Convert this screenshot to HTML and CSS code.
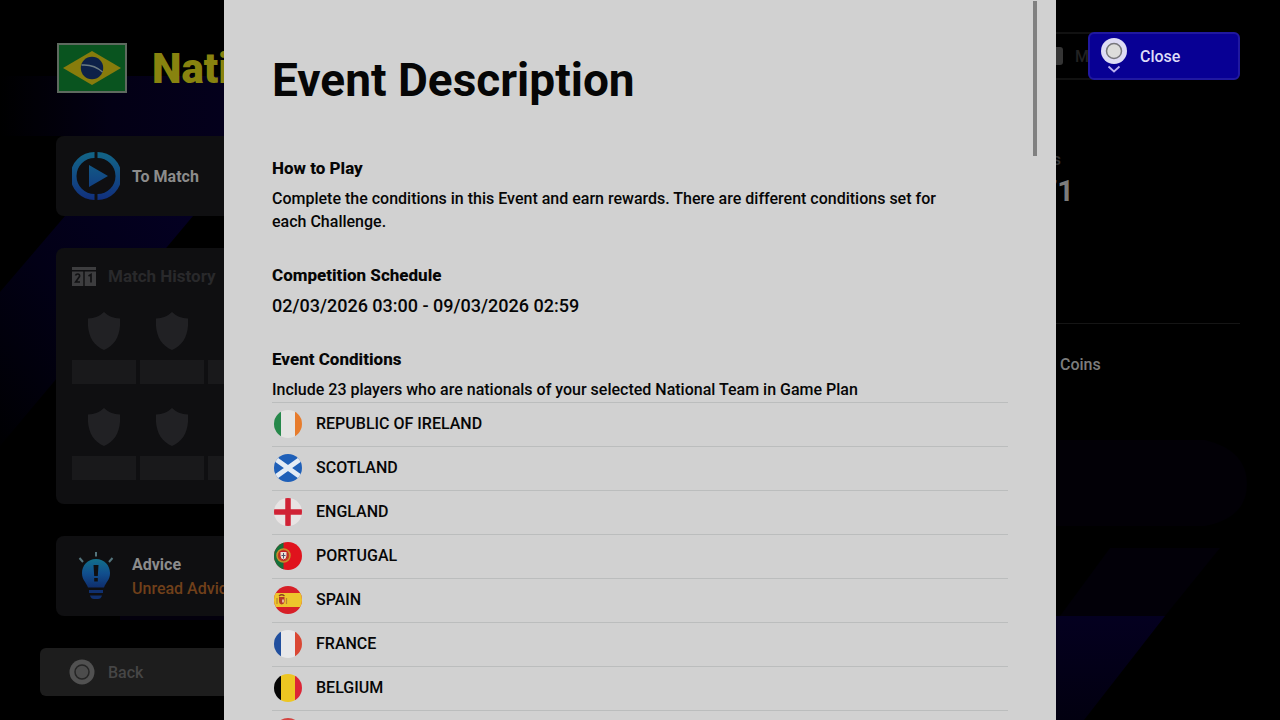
FILE: index.html
```html
<!DOCTYPE html>
<html lang="en">
<head>
<meta charset="utf-8">
<title>Event Description</title>
<link rel="stylesheet" href="styles.css">
</head>
<body>
<div class="screen">
  <svg class="backdrop" viewBox="0 0 1280 720" preserveAspectRatio="none" aria-hidden="true">
    <defs>
      <linearGradient id="band" x1="0" y1="0" x2="1" y2="0"><stop offset="0" stop-color="#000"/><stop offset="0.5" stop-color="#030015"/><stop offset="1" stop-color="#04001c"/></linearGradient>
      <linearGradient id="beam" x1="1" y1="0" x2="0" y2="1"><stop offset="0" stop-color="#040022"/><stop offset="0.5" stop-color="#020016"/><stop offset="1" stop-color="#000002"/></linearGradient>
      <linearGradient id="foot" x1="0" y1="0" x2="0" y2="1"><stop offset="0" stop-color="#040020"/><stop offset="1" stop-color="#020010"/></linearGradient>
    </defs>
    <path d="M0 76H224V136H0z" fill="url(#band)"/>
    <path d="M65 216H193L0 446V292z" fill="url(#beam)"/>
    <path d="M1056 440H1205Q1247 450 1247 484Q1247 518 1205 526H1056z" fill="#020006"/>
    <path d="M1110 548H1220L1165 616H1060z" fill="#020008"/>
    <path d="M1056 616H1165L1084 720H1056z" fill="url(#foot)"/>
    <path d="M120 616H224V620H120z" fill="#03000d"/>
  </svg>

  <header class="top">
    <svg class="flag" viewBox="0 0 70 50" role="img" aria-label="Brazil">
      <rect width="70" height="50" fill="#5e6a5f"/>
      <rect x="2" y="2" width="66" height="46" fill="#09541f"/>
      <path d="M6 25L35 8 64 25 35 42z" fill="#877c0c"/>
      <circle cx="35" cy="25" r="11.200" fill="#0d2148"/>
      <path d="M24.500 22Q37 21 45.500 29" fill="none" stroke="#6c7c83" stroke-width="1.500"/>
    </svg>
    <h2 class="team">Nati</h2>
    <button class="menu" type="button"><span class="menu-icon"></span>Menu</button>
  </header>

  <div class="columns">
    <nav class="side">
      <button class="card action" type="button">
        <svg class="icon" viewBox="0 0 48 48" aria-hidden="true">
          <defs><linearGradient id="ring" x1="0" y1="0" x2="0" y2="1"><stop offset="0" stop-color="#126586"/><stop offset="0.500" stop-color="#124c84"/><stop offset="1" stop-color="#112f7d"/></linearGradient></defs>
          <path d="M22.500 0A24 24 0 0 0 22.500 48V42A18 18 0 0 1 22.500 6zM25.500 0A24 24 0 0 1 25.500 48V42A18 18 0 0 0 25.500 6zM17 13L36 24 17 35z" fill="url(#ring)"/>
        </svg>
        <span class="label">To Match</span>
      </button>

      <section class="card history">
        <h3 class="history-title">
          <svg class="score" viewBox="0 0 24 19" aria-hidden="true"><path d="M0 0H24V3H0zM0 4.500H11.300V19H0zM12.700 4.500H24V19H12.700z" fill="#3d3d3f"/><path d="M3.500 8.500Q4 7 5.700 7Q8 7 7.500 9.500L3.700 15H8M16.500 9L19 7.500V15.500" fill="none" stroke="#111113" stroke-width="1.700"/></svg>
          Match History
        </h3>
        <div class="results">
          <div class="result"><svg class="shield" viewBox="0 0 32 38"><path d="M16 0Q22 6 32 6.500C33 22 28 33 16 38C4 33-1 22 0 6.500Q10 6 16 0z"/></svg><span class="bar"></span></div>
          <div class="result"><svg class="shield" viewBox="0 0 32 38"><path d="M16 0Q22 6 32 6.500C33 22 28 33 16 38C4 33-1 22 0 6.500Q10 6 16 0z"/></svg><span class="bar"></span></div>
          <div class="result"><svg class="shield" viewBox="0 0 32 38"><path d="M16 0Q22 6 32 6.500C33 22 28 33 16 38C4 33-1 22 0 6.500Q10 6 16 0z"/></svg><span class="bar"></span></div>
          <div class="result"><svg class="shield" viewBox="0 0 32 38"><path d="M16 0Q22 6 32 6.500C33 22 28 33 16 38C4 33-1 22 0 6.500Q10 6 16 0z"/></svg><span class="bar"></span></div>
          <div class="result"><svg class="shield" viewBox="0 0 32 38"><path d="M16 0Q22 6 32 6.500C33 22 28 33 16 38C4 33-1 22 0 6.500Q10 6 16 0z"/></svg><span class="bar"></span></div>
          <div class="result"><svg class="shield" viewBox="0 0 32 38"><path d="M16 0Q22 6 32 6.500C33 22 28 33 16 38C4 33-1 22 0 6.500Q10 6 16 0z"/></svg><span class="bar"></span></div>
        </div>
      </section>

      <button class="card action" type="button">
        <svg class="icon" viewBox="0 0 48 48" aria-hidden="true">
          <defs><linearGradient id="bulb" x1="0" y1="0" x2="0" y2="1"><stop offset="0" stop-color="#12708a"/><stop offset="0.500" stop-color="#114f8e"/><stop offset="1" stop-color="#0f2e6d"/></linearGradient></defs>
          <path d="M24 7C15.500 7 10 13.500 10 21C10 28 14 30 16 35.500H32C34 30 38 28 38 21C38 13.500 32.500 7 24 7zM21.500 13H26.500L25.800 24H22.200zM22.200 26H25.800V29.500H22.200z" fill="url(#bulb)" fill-rule="evenodd"/>
          <path d="M17 38H31V41H17zM18 43.500H30Q29 47 26 47H22Q19 47 18 43.500z" fill="#10306e"/>
          <path d="M24 0V4.500M7.500 6L11 10M40.500 6L37 10" stroke="#54747c" stroke-width="2"/>
        </svg>
        <span class="stack"><span class="label">Advice</span><span class="notice">Unread Advice</span></span>
      </button>
    </nav>

    <aside class="stats">
      <p class="stat-name">Points</p>
      <p class="stat-value">71</p>
      <p class="coins">Coins</p>
    </aside>
  </div>

  <button class="back" type="button">
    <svg class="pad" viewBox="0 0 26 26" aria-hidden="true"><circle cx="13" cy="13" r="12.500" fill="#515151"/><circle cx="13" cy="13" r="7" fill="#4c4c4c" stroke="#252525" stroke-width="1.500"/></svg>
    Back
  </button>

  <main class="dialog" role="dialog" aria-labelledby="title">
    <h1 id="title" class="title">Event Description</h1>
    <section class="block">
      <h2 class="heading">How to Play</h2>
      <p class="text">Complete the conditions in this Event and earn rewards. There are different conditions set for each Challenge.</p>
    </section>
    <section class="block">
      <h2 class="heading">Competition Schedule</h2>
      <p class="text date">02/03/2026 03:00 - 09/03/2026 02:59</p>
    </section>
    <section class="block">
      <h2 class="heading">Event Conditions</h2>
      <p class="text">Include 23 players who are nationals of your selected National Team in Game Plan</p>
    </section>
    <ul class="teams">
      <li class="row"><svg class="round" viewBox="0 0 28 28"><path d="M0 0H7V28H0z" fill="#26884a"/><path d="M7 0H21V28H7z" fill="#e4e4e2"/><path d="M21 0H28V28H21z" fill="#e77c2c"/></svg>REPUBLIC OF IRELAND</li>
      <li class="row"><svg class="round" viewBox="0 0 28 28"><path d="M0 0H28V28H0z" fill="#1e5fb8"/><path d="M0 4L28 24M28 4L0 24" stroke="#e3ebf5" stroke-width="5"/></svg>SCOTLAND</li>
      <li class="row"><svg class="round" viewBox="0 0 28 28"><path d="M0 0H28V28H0z" fill="#e8e4e4"/><path d="M14 0V28M0 14H28" stroke="#d02235" stroke-width="5.500"/></svg>ENGLAND</li>
      <li class="row"><svg class="round" viewBox="0 0 28 28"><path d="M0 0H28V28H0z" fill="#e0131d"/><path d="M0 0H9.500V28H0z" fill="#14713b"/><circle cx="9.500" cy="13.500" r="6.500" fill="#bd3d20" stroke="#c98f2c" stroke-width="1.500"/><path d="M6 9.500H13V14Q13 17.500 9.500 18Q6 17.500 6 14z" fill="#e9dfd5" stroke="#c51d23"/><path d="M9.500 11V16.500M7.500 13.500H11.500" stroke="#52516d"/></svg>PORTUGAL</li>
      <li class="row"><svg class="round" viewBox="0 0 28 28"><path d="M0 0H28V28H0z" fill="#d71f27"/><path d="M0 7H28V21H0z" fill="#edc52c"/><path d="M3 12V18M12.500 12V18" stroke="#b98532" stroke-width="1.200"/><path d="M5 11H10.500V15Q10.500 18 7.700 18.500Q5 18 5 15z" fill="#b53a29"/><path d="M5 10Q7.700 7.500 10.500 10" fill="none" stroke="#8d4025" stroke-width="1.300"/><path d="M8 13.500H10V16.500H8z" fill="#e5b29a"/></svg>SPAIN</li>
      <li class="row"><svg class="round" viewBox="0 0 28 28"><path d="M0 0H7V28H0z" fill="#214f9e"/><path d="M7 0H21V28H7z" fill="#e8e8ea"/><path d="M21 0H28V28H21z" fill="#da4734"/></svg>FRANCE</li>
      <li class="row"><svg class="round" viewBox="0 0 28 28"><path d="M0 0H7V28H0z" fill="#060606"/><path d="M7 0H21V28H7z" fill="#edc622"/><path d="M21 0H28V28H21z" fill="#dc2636"/></svg>BELGIUM</li>
      <li class="row"><svg class="round" viewBox="0 0 28 28"><path d="M0 0H28V9H0z" fill="#d3433f"/><path d="M0 9H28V19H0z" fill="#e8e8ea"/><path d="M0 19H28V28H0z" fill="#214f9e"/></svg></li>
    </ul>
    <span class="thumb"></span>
  </main>

  <button class="close" type="button">
    <svg class="close-icon" viewBox="0 0 26 36" aria-hidden="true"><circle cx="13" cy="13" r="13" fill="#dedcf4"/><circle cx="13" cy="13" r="7.500" fill="#dddddb" stroke="#77777c" stroke-width="1.500"/><path d="M7.500 28.500L13 33.500 18.500 28.500" fill="none" stroke="#b9aef0" stroke-width="1.800"/></svg>
    Close
  </button>
</div>
</body>
</html>
```
FILE: styles.css
```css
* { box-sizing: border-box; }
body {
  margin: 0;
  background: #000;
  font-family: Roboto, "Liberation Sans", sans-serif;
  font-size: 16px;
  font-weight: 500;
  line-height: 23px;
}
h1, h2, h3, p, ul { margin: 0; padding: 0; }
button { border: 0; font: inherit; text-align: left; cursor: pointer; }
svg { display: block; flex: none; }

.screen {
  position: relative;
  display: flex;
  flex-direction: column;
  height: 100vh;
  overflow: hidden;
}
.backdrop { position: absolute; inset: 0; width: 100%; height: 100%; }
.top, .columns, .back { position: relative; }

.top {
  display: flex;
  align-items: flex-start;
  padding: 32px 40px 0 57px;
  height: 136px;
  flex: none;
}
.flag { width: 70px; height: 50px; margin-top: 11px; }
.team {
  margin: 11px auto 0 25px;
  color: #88830f;
  font-size: 42px;
  font-weight: 900;
  line-height: 52px;
}
.menu {
  display: flex;
  align-items: center;
  gap: 12px;
  width: 212px;
  height: 48px;
  padding: 0 15px;
  border: 2px solid #111;
  border-radius: 6px;
  background: transparent;
  color: #222;
}
.menu-icon { width: 18px; height: 18px; border-radius: 3px; background: #353535; }

.columns { display: flex; justify-content: space-between; padding: 0 40px 0 56px; }
.side { display: flex; flex-direction: column; gap: 32px; width: 28%; }
.card { border-radius: 8px; background: #0f0f11; }
.action { display: flex; align-items: center; gap: 12px; height: 80px; padding: 0 16px; color: #8c8c8c; }
.icon { width: 48px; height: 48px; }
.label { font-weight: 700; }
.stack { display: flex; flex-direction: column; padding-top: 2px; line-height: 24px; white-space: nowrap; }
.notice { color: #71401a; }

.history { height: 256px; padding: 16px; }
.history-title { display: flex; align-items: center; gap: 12px; color: #29292b; font-size: 17px; line-height: 24px; }
.score { width: 24px; height: 19px; }
.results { display: grid; grid-template-columns: repeat(3, 64px); column-gap: 4px; row-gap: 24px; margin-top: 24px; }
.result { display: flex; flex-direction: column; align-items: center; gap: 10px; }
.shield { width: 32px; height: 38px; fill: #212124; }
.bar { width: 64px; height: 24px; background: #19191b; }

.back {
  display: flex;
  align-items: center;
  gap: 13px;
  width: 25%;
  height: 48px;
  margin: 32px 0 0 40px;
  padding: 0 29px;
  border-radius: 6px;
  background: #1d1d1d;
  color: #464646;
}
.pad { width: 26px; height: 26px; }

.stats { width: 212px; padding-top: 12px; color: #7c7c7c; }
.stat-name { width: 33px; direction: rtl; color: #333; line-height: 24px; }
.stat-value { width: 46px; direction: rtl; font-size: 29px; font-weight: 700; line-height: 38px; }
.coins { margin-top: 113px; padding: 29px 0 0 32px; border-top: 1px solid #151515; }

.dialog {
  position: absolute;
  top: 0;
  bottom: 0;
  left: 50%;
  width: 65%;
  transform: translateX(-50%);
  padding: 52px 48px 0;
  overflow: hidden;
  background: #d1d1d1;
  color: #060606;
}
.title { margin-bottom: 48px; font-size: 46px; font-weight: 700; line-height: 57px; }
.block { margin-bottom: 31px; }
.block:nth-of-type(3) { margin-bottom: 1px; }
.heading { margin-bottom: 8px; font-size: 17px; font-weight: 800; line-height: 22px; }
.text { padding-right: 48px; }
.date { font-size: 18px; }
.teams { list-style: none; }
.row {
  display: flex;
  align-items: center;
  gap: 14px;
  height: 44px;
  padding: 0 2px 2px;
  border-top: 1px solid #bbbdbd;
}
.round { width: 28px; height: 28px; border-radius: 50%; }
.thumb { position: absolute; top: 1px; right: 19px; width: 4px; height: 155px; background: #808080; }

.close {
  position: absolute;
  top: 32px;
  right: 40px;
  display: flex;
  align-items: center;
  gap: 13px;
  width: 152px;
  height: 48px;
  padding: 0 11px;
  border: 2px solid #2018a0;
  border-radius: 6px;
  background: #080094;
  color: #dedcf8;
}
.close-icon { width: 26px; height: 36px; }
```
